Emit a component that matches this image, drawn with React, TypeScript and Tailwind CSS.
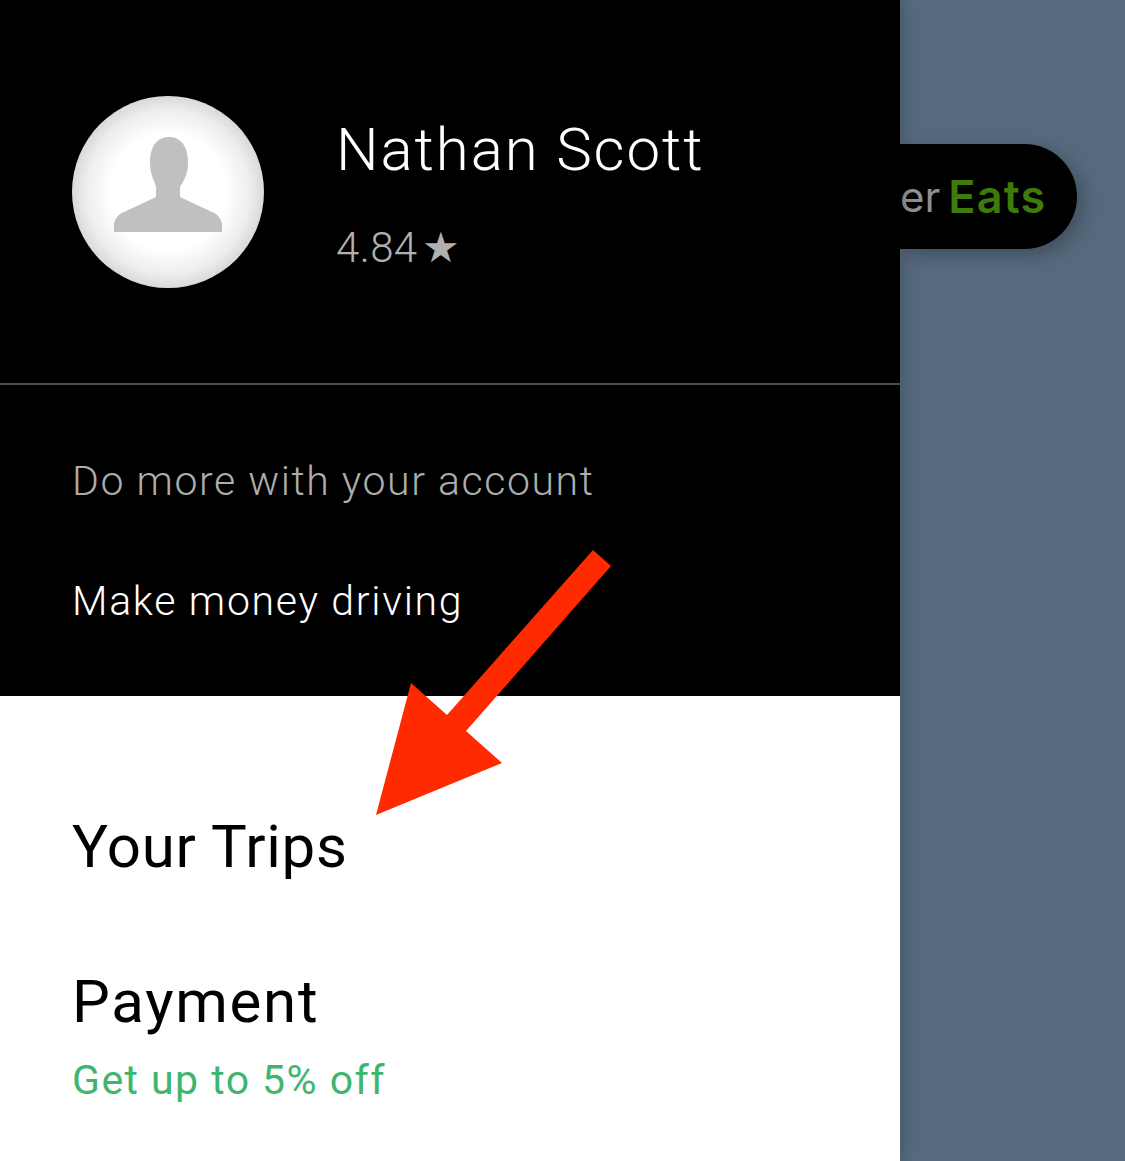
const font = "font-['Roboto',sans-serif]";

function PersonIcon() {
  return (
    <svg viewBox="0 0 108 95" className="w-[108px] h-[95px] mb-[15px]" fill="#c0c0c0">
      <path d="M0 95V86C2 80 5 77 10 75L42 60V50C41 45 36 38 36 26C36 8 44 0 55 0C66 0 74 8 74 26C74 38 69 45 66 50V60L98 75C103 77 106 80 108 86V95Z" />
    </svg>
  );
}

function Arrow() {
  return (
    <svg viewBox="0 0 1125 1161" className="absolute inset-0 z-20 w-[1125px] h-[1161px] pointer-events-none">
      <polygon
        fill="#ff2a00"
        points="376,815 411,683 447,715 593,550 611,566 466,731 502,763"
      />
    </svg>
  );
}

export default function App() {
  return (
    <div className={`relative flex w-[1125px] h-[1161px] overflow-hidden bg-[#56697d] ${font}`}>
      <div className="relative z-10 flex flex-col w-[900px] shrink-0 shadow-[4px_0_12px_rgba(0,0,0,0.15)]">
        <div className="bg-black h-[696px]">
          <div className="flex items-center h-[385px] pl-[72px] border-b-2 border-[#4a4d55]">
            <div className="flex items-center justify-center w-[192px] h-[192px] rounded-full bg-[radial-gradient(circle_closest-side,#ffffff_60%,#eeeeee_85%,#d9d9d9_100%)]">
              <PersonIcon />
            </div>
            <div className="ml-[72px] mt-[4px]">
              <div className="text-[60px] leading-[68px] font-[350] tracking-[1.9px] text-white">Nathan Scott</div>
              <div className="flex items-center mt-[40px] text-[42px] leading-[48px] font-[350] tracking-[0.4px] text-[#b0b0b0]">
                4.84<span className="ml-[4px] text-[42px] leading-[40px]">★</span>
              </div>
            </div>
          </div>
          <div className="pl-[72px] pt-[70px]">
            <div className="text-[41px] leading-[52px] font-[350] tracking-[1.55px] text-[#adadad]">Do more with your account</div>
            <div className="mt-[68px] text-[41px] leading-[52px] font-[350] tracking-[1.7px] text-white">Make money driving</div>
          </div>
        </div>
        <div className="flex-1 bg-white pl-[72px] pt-[115px]">
          <div className="text-[60px] leading-[72px] font-normal tracking-[0.7px] text-black">Your Trips</div>
          <div className="mt-[83px] text-[60px] leading-[72px] font-normal tracking-[1.7px] text-black">Payment</div>
          <div className="mt-[16px] text-[41px] leading-[52px] font-normal tracking-[1.45px] text-[#3fb56f]">Get up to 5% off</div>
        </div>
      </div>

      <div className="absolute left-[900px] top-[144px] flex items-center w-[177px] h-[105px] rounded-r-full bg-black shadow-[6px_6px_18px_rgba(0,0,0,0.25)]">
        <span className="font-['Inter',sans-serif] text-[42px] font-normal text-[#8f8f8f]">er</span>
        <span className="ml-[8px] font-['Inter',sans-serif] text-[45px] font-semibold tracking-[1.2px] text-[#3f7a0c]">Eats</span>
      </div>

      <Arrow />
    </div>
  );
}
